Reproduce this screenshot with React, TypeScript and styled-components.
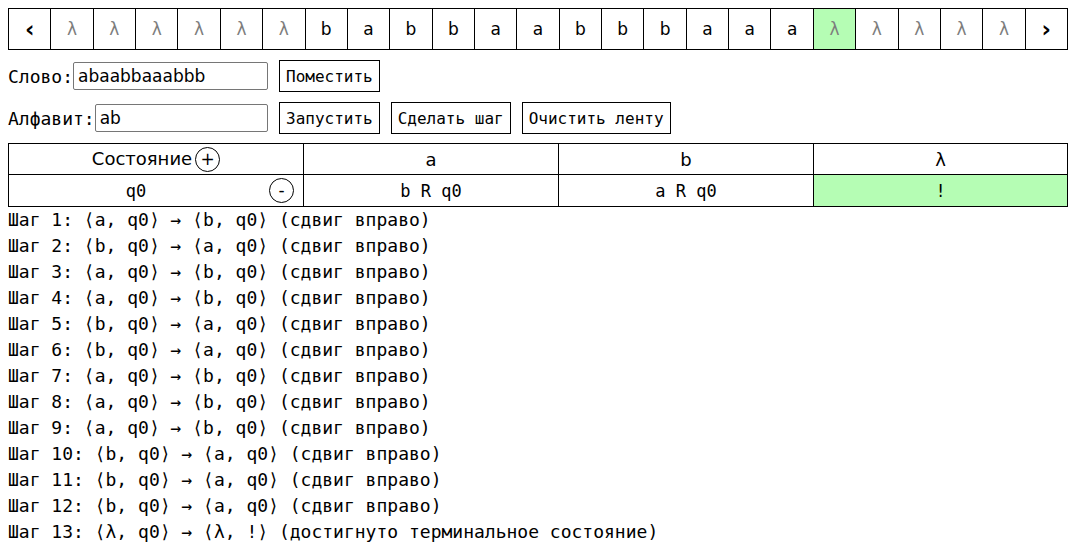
import styled, { createGlobalStyle } from "styled-components";

const GlobalStyle = createGlobalStyle`
  body {
    margin: 8px;
    background: #ffffff;
    color: #000000;
    font-family: "DejaVu Sans Mono", "Liberation Mono", monospace;
  }
`;

const Tape = styled.table`
  width: 100%;
  border-collapse: collapse;
  table-layout: fixed;
`;

const TapeCell = styled.td<{ $blank?: boolean; $head?: boolean }>`
  height: 40px;
  border: 1px solid #000;
  text-align: center;
  padding: 0;
  font-family: "DejaVu Sans", Verdana, sans-serif;
  font-size: 17px;
  color: ${(p) => (p.$blank ? "#7d7d7d" : "#000")};
  background: ${(p) => (p.$head ? "#b5fdb4" : "#fff")};
`;

const Arrow = styled.td`
  height: 40px;
  border: 1px solid #000;
  text-align: center;
  padding: 0;
  font-family: "DejaVu Sans", sans-serif;
  font-size: 23px;
  font-weight: bold;
  cursor: pointer;
`;

const Row = styled.div`
  display: flex;
  align-items: center;
  height: 32px;
  margin-top: 10px;
`;

const Field = styled.label`
  display: flex;
  align-items: center;
  width: 260px;
  font-size: 18px;
`;

const Input = styled.input`
  flex: 1;
  min-width: 0;
  height: 28px;
  box-sizing: border-box;
  border: 1px solid #767676;
  border-radius: 2px;
  padding: 0 4px;
  font-family: "DejaVu Sans", Verdana, sans-serif;
  font-size: 17px;
`;

const Button = styled.button`
  height: 32px;
  margin-left: 11px;
  padding: 0 6px;
  background: #fff;
  border: 1px solid #000;
  border-radius: 0;
  font-family: "DejaVu Sans Mono", monospace;
  font-size: 16px;
  color: #000;
`;

const Rules = styled.table`
  width: 100%;
  margin-top: 9px;
  border-collapse: collapse;
  table-layout: fixed;
`;

const Th = styled.th`
  height: 30px;
  border: 1px solid #000;
  padding: 0;
  font-weight: normal;
  font-family: "DejaVu Sans", Verdana, sans-serif;
  font-size: 18px;
`;

const Td = styled.td<{ $accept?: boolean }>`
  height: 31px;
  border: 1px solid #000;
  padding: 0;
  text-align: center;
  font-size: 17px;
  white-space: pre;
  background: ${(p) => (p.$accept ? "#b5fdb4" : "#fff")};
`;

const StateCell = styled.div`
  display: flex;
  align-items: center;
`;

const StateName = styled.span`
  flex: 1;
  text-align: center;
`;

const Round = styled.button<{ $inline?: boolean }>`
  width: 25px;
  height: 25px;
  margin: ${(p) => (p.$inline ? "0 0 0 3px" : "0 9px 0 6px")};
  padding: 0;
  border: 1px solid #000;
  border-radius: 50%;
  background: #fff;
  font-family: "DejaVu Sans", sans-serif;
  font-size: 17px;
  line-height: 21px;
  color: #000;
  vertical-align: middle;
`;

const Log = styled.div`
  font-size: 18px;
  line-height: 26px;
  white-space: pre;
`;

const BLANK = "λ";
const tape = [
  ...Array(6).fill(BLANK),
  ..."babbaabbbaaa".split(""),
  ...Array(5).fill(BLANK),
];
const headPos = 18;

const word = "abaabbaaabbb";
const swap: Record<string, string> = { a: "b", b: "a" };
const steps = [
  ...word
    .split("")
    .map((c) => `⟨${c}, q0⟩ → ⟨${swap[c]}, q0⟩ (сдвиг вправо)`),
  "⟨λ, q0⟩ → ⟨λ, !⟩ (достигнуто терминальное состояние)",
];

export default function App() {
  return (
    <>
      <GlobalStyle />
      <Tape>
        <tbody>
          <tr>
            <Arrow>‹</Arrow>
            {tape.map((s, i) => (
              <TapeCell key={i} $blank={s === BLANK} $head={i === headPos}>
                {s}
              </TapeCell>
            ))}
            <Arrow>›</Arrow>
          </tr>
        </tbody>
      </Tape>

      <Row>
        <Field>
          Слово:
          <Input defaultValue={word} />
        </Field>
        <Button>Поместить</Button>
      </Row>
      <Row>
        <Field>
          Алфавит:
          <Input defaultValue="ab" />
        </Field>
        <Button>Запустить</Button>
        <Button>Сделать шаг</Button>
        <Button>Очистить ленту</Button>
      </Row>

      <Rules>
        <colgroup>
          <col style={{ width: "295px" }} />
          <col style={{ width: "255px" }} />
          <col style={{ width: "255px" }} />
          <col />
        </colgroup>
        <thead>
          <tr>
            <Th>
              Состояние
              <Round $inline>+</Round>
            </Th>
            <Th>a</Th>
            <Th>b</Th>
            <Th>λ</Th>
          </tr>
        </thead>
        <tbody>
          <tr>
            <Td>
              <StateCell>
                <StateName>q0</StateName>
                <Round>-</Round>
              </StateCell>
            </Td>
            <Td>b R q0</Td>
            <Td>a R q0</Td>
            <Td $accept>!</Td>
          </tr>
        </tbody>
      </Rules>

      <Log>
        {steps.map((s, i) => (
          <div key={i}>{`Шаг ${i + 1}: ${s}`}</div>
        ))}
      </Log>
    </>
  );
}
